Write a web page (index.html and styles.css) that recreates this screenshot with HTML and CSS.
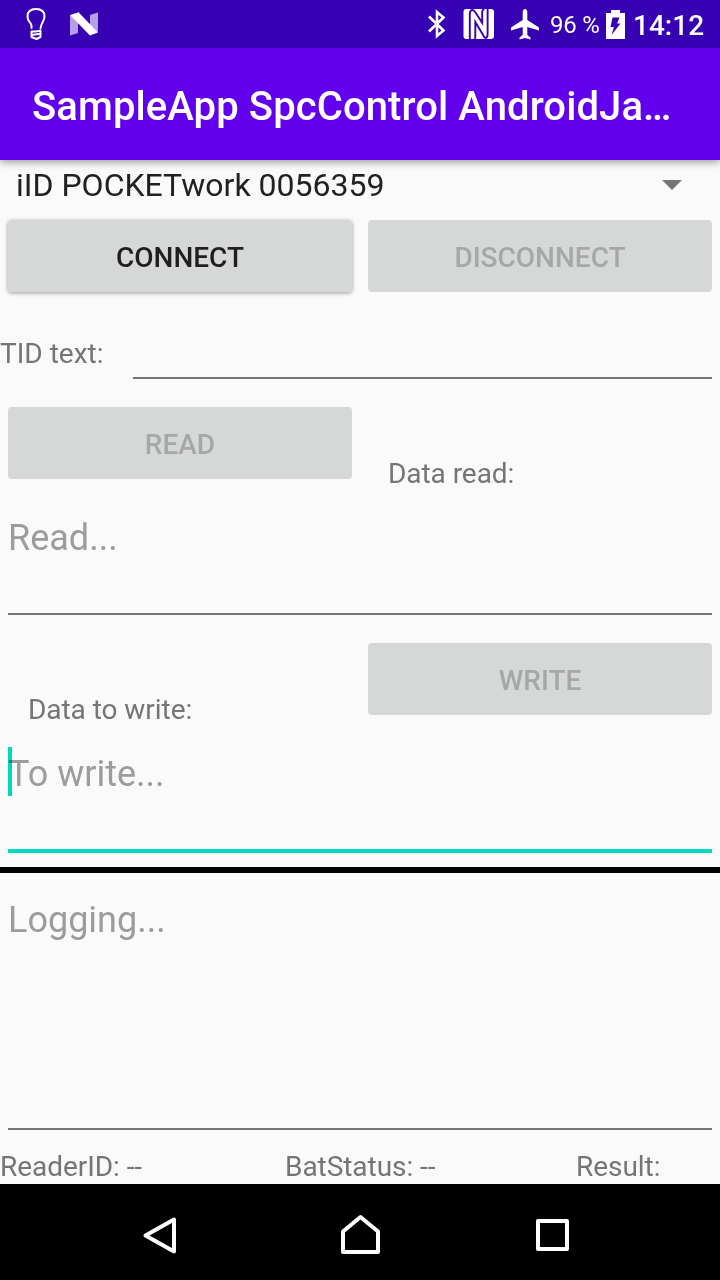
FILE: index.html
```
<!DOCTYPE html>
<html lang="en">
<head>
<meta charset="utf-8">
<title>SampleApp</title>
<link rel="stylesheet" href="styles.css">
</head>
<body>
<div class="screen">
  <div class="status">
    <div class="notices">
      <svg width="20" height="34" viewBox="0 0 20 34" fill="none" stroke="#fff" stroke-width="2" stroke-linecap="round" stroke-linejoin="round"><path d="M5.500 21V19C5.500 15.500 1.500 15 1.500 9.500C1.500 4.500 5 2 10 2S18.500 4.500 18.500 9.500C18.500 14 15 16 14.500 21.500M9.500 24.500L14.500 23.800V30L10.500 32L5.500 30V24.500H9.500M5.500 28L14.500 26.800"/></svg>
      <svg width="28" height="24" viewBox="0 0 28 24"><path fill="#b6a0e5" d="M0 3L8 7V21L0 23.500zM20 3L28 .5V20L20 17z"/><path fill="#fff" d="M0 3L8.500 .3L28 20.500L20 23.500z"/></svg>
    </div>
    <div class="indicators">
      <svg width="18" height="30" viewBox="0 0 18 30" fill="none" stroke="#fff" stroke-width="2.600"><path d="M1 7.500L15.500 21.500L9 27V3L15.500 8.500L1 22.500"/></svg>
      <svg class="nfc" width="32" height="32" viewBox="0 0 32 32"><rect x=".5" y="1" width="30.500" height="30" rx="3" fill="#fff"/><path d="M6.800 31.500V6C6.800 3.500 8 2 9.500 2S11.800 3.500 12.800 5L19.200 14.800V4C19.200 2.500 20 1.500 21 .5M11.800 31.500C12.300 31 12.300 29 12.300 27V14L19.500 26C21 28.500 21.500 30 22.500 30C24 30 24.600 28 24.600 26V.5" fill="none" stroke="#3700b3" stroke-width="1.900"/></svg>
      <svg class="plane" width="28" height="31" viewBox="0 0 28 31"><path fill="#fff" d="M11.700 3Q12 0 14 0T16.300 3V11L28 18.500V21.500L16.300 18V26L19.500 28.500V30.500L14 29L8.500 30.500V28.500L11.700 26V18L0 21.500V18.500L11.700 11z"/></svg>
      <span class="percent">96 %</span>
      <svg class="battery" width="19" height="29" viewBox="0 0 19 29"><path fill="#fff" d="M5 0H14V3H19V29H0V3H5z"/><path fill="#3700b3" d="M6.500 7.500H13.500L11 13.500H14.500L5.500 25L8 17H4.500z"/></svg>
      <span class="clock">14:12</span>
    </div>
  </div>
  <header class="appbar"><span class="title">SampleApp SpcControl AndroidJa…</span></header>
  <main class="content">
    <div class="spinner"><span class="device">iID POCKETwork 0056359</span><svg width="20" height="10" viewBox="0 0 20 10"><path fill="#757575" d="M0 0H20L10 10z"/></svg></div>
    <div class="row"><button class="btn raised">CONNECT</button><button class="btn">DISCONNECT</button></div>
    <div class="tid"><span class="tid-label">TID text:</span><div class="tid-input"></div></div>
    <div class="row"><button class="btn">READ</button><span class="label">Data read:</span></div>
    <div class="field read"><span class="hint">Read...</span></div>
    <div class="row write-row"><span class="label">Data to write:</span><button class="btn">WRITE</button></div>
    <div class="field write"><span class="hint">To write...</span><i class="caret"></i></div>
    <div class="divider"></div>
    <div class="field log"><span class="hint">Logging...</span></div>
    <footer class="info"><span class="reader">ReaderID: --</span><span class="bat">BatStatus: --</span><span>Result:</span></footer>
  </main>
  <nav class="nav">
    <svg width="48" height="48" viewBox="0 0 48 48"><path d="M30 8.500V40.500L1.500 24.500z"/></svg>
    <svg width="48" height="48" viewBox="0 0 48 48"><path d="M7 41V20.500L24.500 6L42 20.500V41z"/></svg>
    <svg width="48" height="48" viewBox="0 0 48 48"><path d="M10 10H39V38H10z"/></svg>
  </nav>
</div>
</body>
</html>
```
FILE: styles.css
```
* { box-sizing: border-box; }
body { margin: 0; font-family: Roboto, "Liberation Sans", sans-serif; }
.screen { width: 720px; height: 1280px; display: flex; flex-direction: column; background: #fafafa; color: #757575; font-size: 28px; overflow: hidden; }
svg { display: block; flex: none; }
span { white-space: nowrap; }
.status { height: 48px; flex: none; background: #3700b3; color: #fff; display: flex; justify-content: space-between; padding: 0 16px 0 26px; position: relative; z-index: 2; }
.notices, .indicators { display: flex; align-items: center; }
.notices { gap: 24px; }
.nfc { margin-left: 17px; }
.plane { margin-left: 16px; }
.percent { font-size: 24px; letter-spacing: -.2px; margin-left: 11px; width: 50px; padding-top: 2px; }
.battery { margin-left: 6px; }
.clock { font-size: 28px; font-weight: 500; margin-left: 8px; width: 71px; padding-top: 2px; }
.appbar { height: 112px; flex: none; background: #6200ee; color: #fff; display: flex; align-items: center; padding: 4px 32px 0; box-shadow: 0 2px 8px rgba(0,0,0,.4); position: relative; z-index: 1; }
.title { font-size: 40px; font-weight: 500; letter-spacing: .1px; }
.content { height: 1024px; display: flex; flex-direction: column; }
.spinner { height: 60px; display: flex; justify-content: space-between; align-items: flex-start; padding: 0 38px 0 16px; }
.spinner svg { margin-top: 20px; }
.device { font-size: 32px; line-height: 50px; color: #212121; }
.row { height: 72px; flex: none; display: flex; gap: 16px; padding: 0 8px; }
.btn { width: 344px; height: 72px; border: 0; border-radius: 4px; background: #d6d8d7; color: #a6a8a7; font: 500 28px Roboto, sans-serif; padding: 3px 0 0; }
.raised { color: #1f1f1f; box-shadow: 0 1px 4px rgba(0,0,0,.4); }
.tid { height: 87px; flex: none; display: flex; margin-bottom: 28px; padding-right: 8px; }
.tid-label { width: 133px; line-height: 32px; padding-top: 46px; }
.tid-input { flex: 1; border-bottom: 2px solid #757575; }
.label { width: 344px; line-height: 32px; letter-spacing: -.05px; padding: 51px 0 0 20px; }
.field { flex: none; margin: 0 8px; border-bottom: 2px solid #757575; position: relative; }
.hint { display: block; font-size: 36px; line-height: 49px; color: #9c9c9c; }
.read { height: 136px; padding-top: 35px; }
.write-row { margin-top: 28px; }
.write { height: 138px; padding-top: 35px; border-bottom: 4px solid #03dac5; }
.caret { position: absolute; left: 0; top: 32px; width: 4px; height: 49px; background: #03dac5; mix-blend-mode: multiply; }
.divider { height: 6px; margin-top: 14px; background: #000; flex: none; }
.log { height: 257px; padding-top: 23px; }
.info { height: 54px; display: flex; line-height: 32px; letter-spacing: -.05px; padding-top: 21px; }
.reader { width: 285px; }
.bat { width: 291px; }
.nav { height: 96px; flex: none; background: #000; display: flex; justify-content: center; align-items: center; gap: 144px; padding-top: 6px; }
.nav path { fill: none; stroke: #fff; stroke-width: 4; stroke-linejoin: round; }
.nav svg { overflow: visible; }
```
